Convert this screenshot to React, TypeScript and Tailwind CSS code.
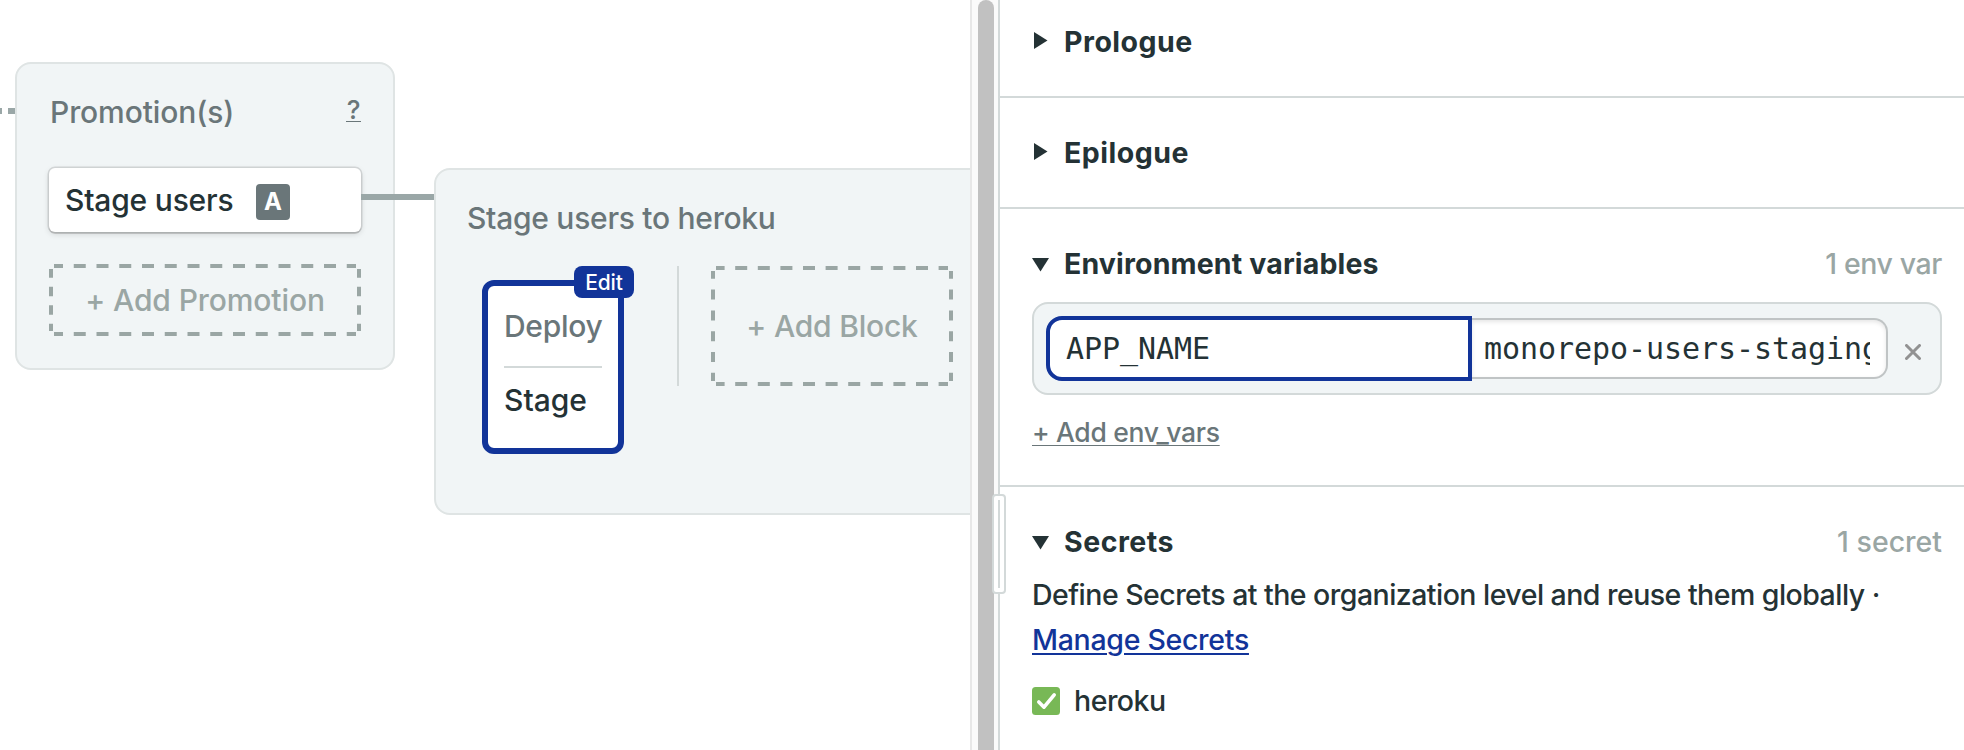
import type { ReactNode } from "react";

type DashProps = { width: number; height: number; h: string; hOffset: number; v: string; vOffset: number };

function DashedOutline({ width, height, h, hOffset, v, vOffset }: DashProps) {
  return (
    <svg
      className="absolute inset-0 text-[#9aa6a4]"
      width={width}
      height={height}
      fill="none"
      stroke="currentColor"
      strokeWidth="4"
      aria-hidden="true"
    >
      <path d={`M5 2H${width - 5}M5 ${height - 2}H${width - 5}`} strokeDasharray={h} strokeDashoffset={hOffset} />
      <path d={`M2 5V${height - 5}M${width - 2} 5V${height - 5}`} strokeDasharray={v} strokeDashoffset={vOffset} />
    </svg>
  );
}

function Triangle({ open }: { open: boolean }) {
  return (
    <svg className="h-9 w-8 shrink-0 fill-[#243235]" viewBox="0 0 32 36" aria-hidden="true">
      <path d={open ? "M0 12H17L8.5 25.5Z" : "M2 8V25L15.5 16.5Z"} />
    </svg>
  );
}

function SectionHeader({ open, title, count }: { open: boolean; title: ReactNode; count?: ReactNode }) {
  return (
    <div className="flex h-9">
      <Triangle open={open} />
      <h3 className="text-[28.5px] leading-9 font-bold whitespace-nowrap">{title}</h3>
      {count}
    </div>
  );
}

function PromotionCard() {
  return (
    <div className="mt-[62px] h-[308px] w-[380px] shrink-0 rounded-2xl border-2 border-[#dfe4e4] bg-[#f1f5f6] px-8 pt-[30px]">
      <div className="flex h-9 justify-between text-[#6a7679]">
        <span className="pl-px text-[30px] leading-9 font-medium tracking-[-0.1px]">Promotion(s)</span>
        <a className="h-7 w-[15px] border-b border-[#6a7679] text-center text-[26px] leading-[31px] font-medium">?</a>
      </div>
      <div className="mt-[38px] flex h-16 items-center rounded-md bg-white pl-4 shadow-[0_0_0_1.5px_rgba(0,0,0,0.11),0_2px_0_0_rgba(0,0,0,0.1),0_2px_6px_rgba(0,0,0,0.14)]">
        <span className="w-[191px] text-[30px] leading-9 font-medium tracking-[-0.2px] whitespace-nowrap text-[#243235]">
          Stage users
        </span>
        <span className="mt-1 h-9 w-[34px] rounded-[4px] bg-[#6a7679] text-center text-2xl leading-9 font-bold text-white">
          A
        </span>
      </div>
      <div className="relative mt-8 flex h-[72px] items-center justify-center text-[30px] leading-9 font-medium tracking-[-0.1px] text-[#9aa6a4]">
        <DashedOutline width={312} height={72} h="12 10.75" hOffset={3} v="9.5 9" vOffset={0.7} />
        + Add Promotion
      </div>
    </div>
  );
}

function PipelineCard() {
  return (
    <div className="mt-[168px] h-[347px] w-[620px] shrink-0 rounded-2xl border-2 border-[#dfe4e4] bg-[#f1f5f6] pt-[30px] pl-[31px]">
      <div className="text-[30px] leading-9 font-medium tracking-[-0.27px] text-[#6a7679]">Stage users to heroku</div>
      <div className="mt-[30px] flex items-start">
        <div className="relative mt-[14px] ml-[15px] h-[174px] w-[142px] rounded-xl border-6 border-[#123499] bg-white px-4 pt-[22px] text-[30px] leading-9 font-medium">
          <div className="tracking-[-0.3px] text-[#6a7679]">Deploy</div>
          <div className="mt-[22px] h-0.5 bg-[#d3d9d9]" />
          <div className="mt-[14px] text-[#243235]">Stage</div>
          <span className="absolute -top-5 -right-4 h-8 w-[60px] rounded-lg bg-[#123499] pt-px text-center text-[21px] leading-8 tracking-[-0.1px] text-white">
            Edit
          </span>
        </div>
        <div className="ml-[53px] h-[120px] w-0.5 bg-[#d3d9d9]" />
        <div className="relative ml-8 flex h-[120px] w-[242px] items-center justify-center text-[30px] leading-9 font-medium tracking-[-0.2px] text-[#9aa6a4]">
          <DashedOutline width={242} height={120} h="12 10.6" hOffset={3.4} v="10 10.8" vOffset={2.2} />
          + Add Block
        </div>
      </div>
    </div>
  );
}

function Canvas() {
  return (
    <main className="flex h-full w-[970px] shrink-0 items-start overflow-hidden">
      <div className="mt-[108px] flex h-1.5 w-[15px] shrink-0 justify-between">
        <div className="w-0.5 bg-[#9aa7a7]" />
        <div className="w-[7px] bg-[#9aa7a7]" />
      </div>
      <PromotionCard />
      <div className="relative mt-[194px] -ml-[34px] h-1.5 w-[73px] shrink-0 bg-[#9aa7a7]" />
      <PipelineCard />
    </main>
  );
}

function Splitter() {
  return (
    <div className="relative flex h-full w-[30px] shrink-0 border-r-2 border-l-2 border-r-[#d3d9d9] border-l-[#e7e7e7] bg-[#fafafa] pl-1.5">
      <div className="h-full w-4 rounded-t-full bg-[#c1c1c1]" />
      <div className="absolute top-[494px] -right-2 z-10 flex h-[100px] w-[14px] justify-center rounded-[4px] border-2 border-[#d3d9d9] bg-white py-1">
        <div className="w-0.5 bg-[#d3d9d9]" />
      </div>
    </div>
  );
}

function EnvVarRow() {
  return (
    <div className="mt-5 flex h-[93px] items-center rounded-2xl border-2 border-[#d3d9d9] bg-[#f1f5f6] pl-3 font-['DejaVu_Sans_Mono',monospace] text-[30px] leading-9 tracking-[-0.06px]">
      <div className="flex h-[65px] w-[426px] items-center rounded-l-2xl border-4 border-[#123499] bg-white pl-4">
        APP_NAME
      </div>
      <div className="flex h-[61px] w-[416px] items-center rounded-r-[14px] border-2 border-l-0 border-[#c0c4c5] bg-white pr-4 pl-3 shadow-[inset_0_2px_4px_rgba(0,0,0,0.1)]">
        <span className="overflow-hidden whitespace-nowrap">monorepo-users-staging</span>
      </div>
      <svg className="mt-[7px] ml-[17px] size-4 stroke-[#929292]" viewBox="0 0 16 16" fill="none" aria-label="Remove">
        <path d="M1.5 1.5L14.5 14.5M14.5 1.5L1.5 14.5" strokeWidth="3" strokeLinecap="round" />
      </svg>
    </div>
  );
}

function Settings() {
  return (
    <aside className="h-full flex-1 bg-white text-[#243235]">
      <section className="h-[98px] border-b-2 border-[#d3d9d9] pt-6 pr-[22px] pl-8">
        <SectionHeader open={false} title={<span className="tracking-[0.5px]">Prologue</span>} />
      </section>
      <section className="h-[111px] border-b-2 border-[#d3d9d9] pt-[37px] pr-[22px] pl-8">
        <SectionHeader open={false} title={<span className="tracking-[0.5px]">Epilogue</span>} />
      </section>
      <section className="h-[278px] border-b-2 border-[#d3d9d9] pt-[37px] pr-[22px] pl-8">
        <SectionHeader
          open
          title={<span className="tracking-[0.15px]">Environment variables</span>}
          count={
            <span className="ml-auto text-[28.5px] leading-9 font-medium tracking-[-0.4px] text-[#9aa6a4]">1 env var</span>
          }
        />
        <EnvVarRow />
        <a className="mt-[21px] block w-fit text-[26.5px] leading-8 font-medium tracking-[-0.32px] text-[#6a7679] underline decoration-1 underline-offset-[3px]">
          + Add env_vars
        </a>
      </section>
      <section className="pt-[37px] pr-[22px] pl-8">
        <SectionHeader
          open
          title={<span className="tracking-[0.5px]">Secrets</span>}
          count={<span className="ml-auto text-[28.5px] leading-9 font-medium text-[#9aa6a4]">1 secret</span>}
        />
        <p className="mt-3 text-[28.5px] leading-[45px] font-medium tracking-[-0.53px]">
          <span className="block whitespace-nowrap">
            Define Secrets at the organization level and reuse them globally ·
          </span>
          <a className="tracking-[-0.3px] text-[#123499] underline decoration-2 underline-offset-[3px]">Manage Secrets</a>
        </p>
        <div className="mt-[21px] flex h-9 items-center text-[28.5px] leading-9 font-medium tracking-[-0.5px]">
          <svg className="mr-[14px] size-7" viewBox="0 0 28 28" fill="none" aria-hidden="true">
            <rect width="28" height="28" rx="3.5" fill="#78b856" />
            <path d="M6.8 15L12 20.2L22.2 7.8" stroke="#fff" strokeWidth="3.6" strokeLinecap="round" strokeLinejoin="round" />
          </svg>
          heroku
        </div>
      </section>
    </aside>
  );
}

export default function App() {
  return (
    <div className="flex h-[750px] w-[1964px] overflow-hidden bg-white font-['Inter',sans-serif]">
      <Canvas />
      <Splitter />
      <Settings />
    </div>
  );
}
